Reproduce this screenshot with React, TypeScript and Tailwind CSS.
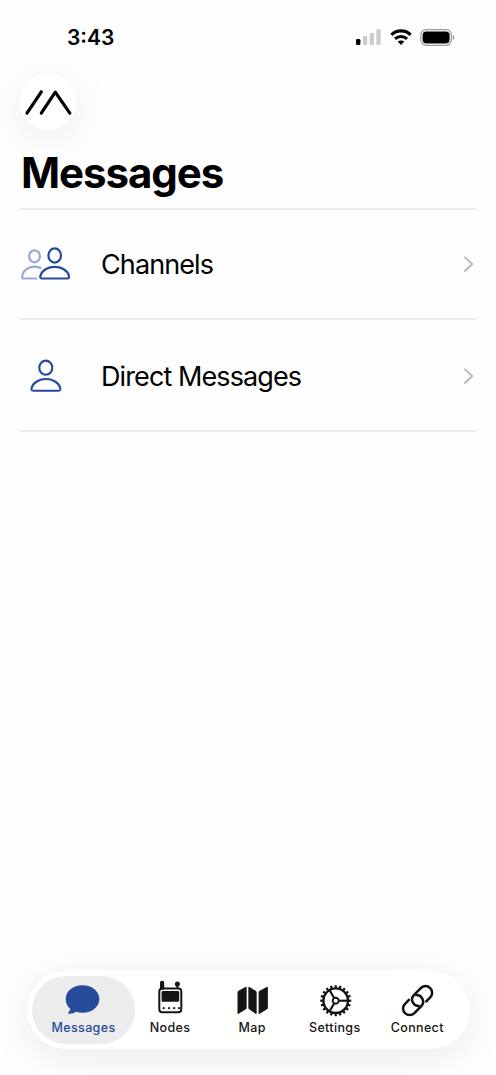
import React from "react";

const Logo = () => (
  <svg width="56" height="56" viewBox="0 0 56 56" fill="none">
    <path
      d="M7 39.2L21.3 17.8M21.3 39.2L35.3 18.2L49.8 39.2"
      stroke="#000"
      strokeWidth="3.2"
      strokeLinecap="round"
      strokeLinejoin="round"
    />
  </svg>
);

const SignalIcon = () => (
  <svg width="25" height="17" viewBox="0 0 25 17">
    <rect x="0" y="10" width="4.4" height="6" rx="1.3" fill="#000" />
    <rect x="7" y="7" width="4.2" height="9" rx="1.2" fill="#cbcbcb" />
    <rect x="13.7" y="4" width="4.2" height="12" rx="1.2" fill="#cbcbcb" />
    <rect x="20.4" y="0.3" width="4.2" height="15.7" rx="1.2" fill="#cbcbcb" />
  </svg>
);

const WifiIcon = () => (
  <svg width="22" height="17" viewBox="0 0 22 17" fill="none" stroke="#000" strokeWidth="3.1">
    <path d="M1.4 5.8C6.7 0.6 15.3 0.6 20.6 5.8" />
    <path d="M5 9.8C8.4 6.7 13.6 6.7 17 9.8" />
    <path d="M7.7 12.6C9.6 11 12.4 11 14.3 12.6L11 16Z" fill="#000" stroke="none" />
  </svg>
);

const BatteryIcon = () => (
  <svg width="35" height="17" viewBox="0 0 35 17">
    <rect x="0.8" y="0.7" width="30.6" height="15.6" rx="5.2" fill="none" stroke="#9a9a9a" strokeWidth="1.2" />
    <rect x="2.6" y="2.5" width="27" height="12" rx="3.7" fill="#000" />
    <path d="M32.8 6V11C34.8 10.2 34.8 6.8 32.8 6Z" fill="#8f8f8f" />
  </svg>
);

const ChannelsIcon = () => (
  <svg width="50" height="34" viewBox="0 0 50 34" fill="none" stroke="#2548a0" strokeWidth="2.2">
    <g stroke="#98a9d3">
      <ellipse cx="14.5" cy="9.3" rx="5.4" ry="6" />
      <path d="M21.2 21.3C13.5 17.3 3.2 21.4 2.2 29.4C2 30.9 2.6 31.5 3.8 31.5H17.3" />
    </g>
    <ellipse cx="34.7" cy="8.5" rx="6.3" ry="7.2" />
    <path d="M22.2 31.5C20.4 31.5 20 30.3 20.5 28.7C24.2 16.9 45.2 16.9 48.9 28.7C49.4 30.3 49 31.5 47.2 31.5Z" />
  </svg>
);

const PersonIcon = () => (
  <svg width="50" height="34" viewBox="0 0 50 34" fill="none" stroke="#2548a0" strokeWidth="2.1">
    <ellipse cx="25.8" cy="8.7" rx="6.5" ry="7.1" />
    <path d="M13.3 31.7C11.5 31.7 11.2 30.5 11.6 28.9C15.3 17.1 36.5 17.1 40.2 28.9C40.6 30.5 40.3 31.7 38.5 31.7Z" />
  </svg>
);

const ChevronIcon = () => (
  <svg width="12" height="18" viewBox="0 0 12 18" fill="none">
    <path
      d="M1.2 2.5L8.2 9.1L1.2 15.7"
      stroke="#bfbfbf"
      strokeWidth="2.3"
      strokeLinecap="round"
      strokeLinejoin="round"
    />
  </svg>
);

const BubbleIcon = () => (
  <svg width="36" height="36" viewBox="0 0 36 36" fill="#274b9b">
    <path d="M17.5 3.3C27.1 3.3 34.3 9.3 34.3 17C34.3 24.8 27.1 30.8 17.5 30.8C15.1 30.8 13 30.5 11.2 29.8C9.1 31 5.9 32.1 3.9 31.7C3 31.5 3 30.8 3.5 30.2C4.5 29.1 5.3 27.8 5.2 26.8C2.4 24.3 0.7 20.8 0.7 17C0.7 9.3 7.9 3.3 17.5 3.3Z" />
  </svg>
);

const NodeIcon = () => (
  <svg className="overflow-visible" width="36" height="36" viewBox="0 0 36 36" fill="#151515">
    <rect x="8" y="-1.2" width="4.2" height="9" rx="1.9" />
    <circle cx="25.4" cy="2" r="2.5" />
    <path d="M24.4 3H26.4V7H24.4Z" />
    <rect x="7.3" y="6.6" width="22" height="23.6" rx="3" fill="none" stroke="#151515" strokeWidth="2" />
    <rect x="9.6" y="8.9" width="17.6" height="10.9" rx="1.4" />
    {[11.7, 17, 22.2, 27].map((x) => (
      <circle key={x} cx={x} cy="26.2" r="1.1" />
    ))}
  </svg>
);

const MapIcon = () => (
  <svg
    width="36"
    height="36"
    viewBox="0 0 36 36"
    fill="#151515"
    stroke="#151515"
    strokeWidth="1"
    strokeLinejoin="round"
  >
    <path d="M4 9.6L12.1 5.2V26.6L4 31.6Z" />
    <path d="M14.9 5.2L22.1 9.6V31.6L14.9 26.6Z" />
    <path d="M25.1 9.6L33.3 5.2V26.6L25.1 31.6Z" />
  </svg>
);

const teeth = Array.from({ length: 20 }, (_, i) => i * 18);

const GearIcon = () => (
  <svg width="36" height="36" viewBox="0 0 36 36" fill="none" stroke="#111">
    <g transform="translate(19.7 18.7)">
      <circle r="12.3" strokeWidth="2.4" />
      <circle r="3" strokeWidth="1.9" />
      {teeth.map((deg) => (
        <path key={deg} d="M13 0H15.5" strokeWidth="2.2" transform={`rotate(${deg})`} />
      ))}
      {[0, 120, 240].map((deg) => (
        <path key={deg} d="M3.5 0H12" strokeWidth="2.1" transform={`rotate(${deg})`} />
      ))}
    </g>
  </svg>
);

const LinkIcon = () => (
  <svg width="36" height="36" viewBox="0 0 36 36" fill="none" stroke="#111" strokeWidth="2.5">
    <g transform="translate(18.6 18.6) rotate(-45)">
      <path d="M4.6 6.6H11.2A6.6 6.6 0 0 0 11.2 -6.6H1.6A6.6 6.6 0 0 0 -2.2 5.4" />
      <path d="M-4.6 -6.6H-11.2A6.6 6.6 0 0 0 -11.2 6.6H-1.6A6.6 6.6 0 0 0 2.2 -5.4" />
    </g>
  </svg>
);

const rows = [
  { label: "Channels", icon: <ChannelsIcon />, box: "h-[110px]", spacing: "tracking-[-0.9px]" },
  { label: "Direct Messages", icon: <PersonIcon />, box: "h-[112px] pt-0.5", spacing: "tracking-[-0.9px]" },
];

const tabs = [
  { label: "Messages", icon: <BubbleIcon />, box: "w-[103px] rounded-full bg-[#ececec] text-[#274b9b]" },
  { label: "Nodes", icon: <NodeIcon />, box: "w-[70px] mr-1.5 text-[#151515]" },
  { label: "Map", icon: <MapIcon />, box: "w-[82.5px] text-[#151515]" },
  { label: "Settings", icon: <GearIcon />, box: "w-[82.5px] text-[#151515]" },
  { label: "Connect", icon: <LinkIcon />, box: "w-[82.5px] text-[#151515]" },
];

const StatusBar = () => (
  <div className="flex h-[74px] items-start justify-between pl-[67px] pr-[41px]">
    <span className="mt-[23px] text-[21px] leading-[30px] font-semibold">3:43</span>
    <div className="mt-[29px] flex items-center">
      <SignalIcon />
      <div className="ml-[9px]">
        <WifiIcon />
      </div>
      <div className="ml-[8px]">
        <BatteryIcon />
      </div>
    </div>
  </div>
);

export default function App() {
  return (
    <div className="flex h-[1075px] w-[496px] flex-col overflow-hidden bg-[#fefefe] font-['Inter',sans-serif] text-black">
      <StatusBar />
      <header className="px-5">
        <div className="h-14 w-14 rounded-full bg-[#fffffe] shadow-[0_8px_44px_rgba(0,0,0,0.08)]">
          <Logo />
        </div>
        <h1 className="mt-[17px] mb-px ml-px h-[60px] text-[42px] leading-[52px] font-bold tracking-[-1.05px]">
          Messages
        </h1>
      </header>
      <ul className="mx-5 border-t-2 border-[#ebebeb]">
        {rows.map((row) => (
          <li key={row.label} className={`flex items-center border-b-2 border-[#ebebeb] ${row.box}`}>
            {row.icon}
            <span className={`mt-0.5 ml-[31px] flex-1 text-[27px] leading-8 ${row.spacing}`}>{row.label}</span>
            <ChevronIcon />
          </li>
        ))}
      </ul>
      <nav className="mx-auto mt-auto mb-[26px] flex h-[78px] w-[443px] rounded-full bg-[#fffffe] px-[5px] py-[5px] shadow-[0_8px_44px_rgba(0,0,0,0.08)]">
        {tabs.map((tab) => (
          <div key={tab.label} className={`flex h-[68px] shrink-0 flex-col items-center pt-1.5 ${tab.box}`}>
            {tab.icon}
            <span className="ml-px text-[12.5px] leading-[19px] font-medium tracking-[0.35px]">{tab.label}</span>
          </div>
        ))}
      </nav>
    </div>
  );
}
